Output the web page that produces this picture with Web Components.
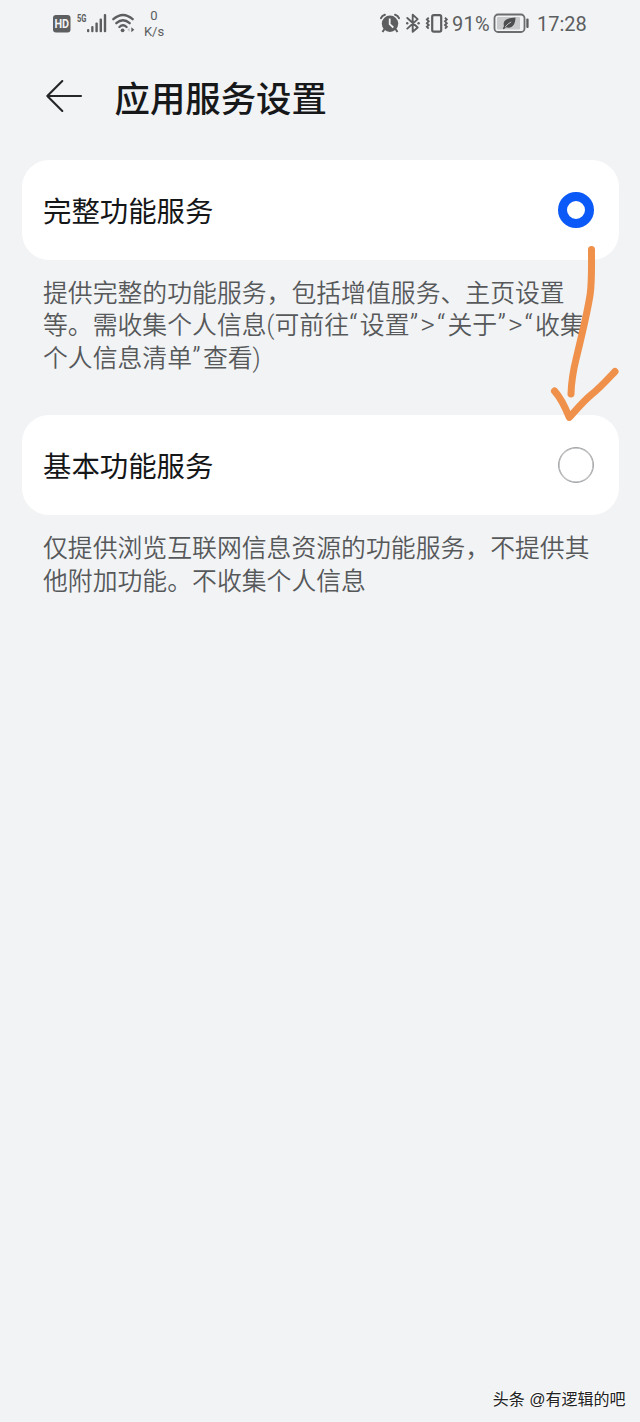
<!DOCTYPE html>
<html lang="zh-CN">
<head>
<meta charset="utf-8">
<title>应用服务设置</title>
<style>
body { margin: 0; background: #f1f3f5; font-family: Roboto, "Noto Sans CJK SC", sans-serif; }
</style>
</head>
<body>
<settings-page></settings-page>
<script>
const define = (name, html) => customElements.define(name, class extends HTMLElement {
  constructor() {
    super();
    this.attachShadow({ mode: 'open' }).innerHTML = html;
  }
});

define('status-bar', `
<style>
:host { display: flex; justify-content: space-between; box-sizing: border-box; height: 48px; padding: 0 53px 0 52px; color: #5c5e60; }
.side { display: flex; height: 48px; align-items: center; }
svg { display: block; flex: none; }
.rate { width: 24px; margin: -1px 0 0 6px; text-align: center; font-size: 13px; line-height: 15.5px; }
.rate div { white-space: nowrap; }
.pct { font-size: 20px; line-height: 24px; margin-left: 2px; width: 41px; letter-spacing: .3px; }
.time { font-size: 20px; line-height: 24px; margin-left: 7px; width: 50px; white-space: nowrap; }
</style>
<div class="side">
<svg width="84" height="48" viewBox="52 0 84 48" fill="#5c5e60">
<rect x="53" y="15" width="17.5" height="17.5" rx="3"/>
<text x="54.4" y="28.2" font-family="Roboto" font-weight="700" font-size="12" textLength="14.6" lengthAdjust="spacingAndGlyphs" fill="#f1f3f5">HD</text>
<text x="77" y="22" font-family="Roboto" font-weight="700" font-size="11" textLength="9.5" lengthAdjust="spacingAndGlyphs">5G</text>
<rect x="87" y="29" width="2.3" height="3.2" rx="1"/><rect x="91.2" y="26" width="2.3" height="6.2" rx="1"/><rect x="95.4" y="22.5" width="2.4" height="9.7" rx="1"/><rect x="99.6" y="18.5" width="2.4" height="13.7" rx="1"/><rect x="103.8" y="14" width="2.4" height="18.2" rx="1"/>
<g fill="none" stroke="#5c5e60" stroke-width="2.3" stroke-linecap="round"><path d="M113.3 19.2Q123 10.8 132.7 19.2M116.3 23.2Q123 17.4 129.7 23.2M119.4 27Q123 23.6 126.6 27"/></g>
<circle cx="122.6" cy="30.3" r="1.9"/><path d="M131.3 27.3l3 2.5-3 2.5z"/><path d="M129.6 27.8l-2.3 2 2.3 2z" opacity=".3"/>
</svg>
<div class="rate"><div>0</div><div>K/s</div></div>
</div>
<div class="side">
<svg width="71" height="48" viewBox="379 0 71 48" fill="#5c5e60">
<circle cx="390" cy="23.7" r="8.2"/><path d="M384.5 29l-2 3M395.5 29l2 3" stroke="#5c5e60" stroke-width="2"/>
<path d="M381 18.2Q382 15.5 384.9 14.8M399 18.2Q398 15.5 395.1 14.8" fill="none" stroke="#5c5e60" stroke-width="2" stroke-linecap="round"/>
<path d="M389.7 18.5v5.7l3.6 3.3" fill="none" stroke="#f1f3f5" stroke-width="1.8"/>
<path d="M407.3 18l10.4 9.5-5 4.3v-17l5 4.3-10.4 9.5" fill="none" stroke="#5c5e60" stroke-width="1.9" stroke-linejoin="round" stroke-linecap="round"/>
<circle cx="407.2" cy="23.3" r="1.2"/><circle cx="418.6" cy="23.3" r="1.2"/>
<rect x="432.2" y="15.1" width="9" height="16.5" rx="1.6" fill="none" stroke="#5c5e60" stroke-width="2.2"/>
<path d="M428.7 17.7l-1.8 1.8 1.8 1.8-1.8 1.9 1.8 1.8-1.8 1.8 1.8 1.8M445 17.7l1.8 1.8-1.8 1.8 1.8 1.9-1.8 1.8 1.8 1.8-1.8 1.8" fill="none" stroke="#5c5e60" stroke-width="1.9"/>
</svg>
<span class="pct">91%</span>
<svg width="37" height="48" viewBox="494 0 37 48" fill="#5c5e60">
<rect x="495.5" y="14.5" width="30" height="17.5" rx="3.5" fill="none" stroke="#6b6d6f" stroke-width="1.8"/>
<rect x="498" y="17" width="23" height="12.5" rx="1" fill="#c9cbcd"/>
<path d="M505 26C503.2 20.5 508 18 516.5 17.6 516.3 25 513 29 507 27.3L504.8 29.3 503.8 28.5z" fill="#4c4e50"/><path d="M506.2 27q2.5-3.5 6-5" fill="none" stroke="#c9cbcd" stroke-width=".9"/>
<rect x="527.3" y="18.5" width="2.3" height="9.5" rx="1"/>
</svg>
<span class="time">17:28</span>
</div>`);

define('page-header', `
<style>
:host { display: flex; align-items: center; height: 100px; box-sizing: border-box; padding: 0 0 2px 45px; }
svg { display: block; margin: -2px 31.5px 0 0; }
h1 { margin: 5px 0 0; color: #17181a; font-size: 35.4px; font-weight: 500; line-height: 50px; white-space: nowrap; }
</style>
<svg width="38" height="34" viewBox="0 0 38 34" fill="none" stroke="#242628" stroke-width="2.1" stroke-linecap="round" stroke-linejoin="round"><path d="M36 17H2.3M17.3 2L2.3 17l15 15"/></svg>
<h1><slot></slot></h1>`);

define('radio-mark', `
<style>
:host { display: block; box-sizing: border-box; width: 36px; height: 36px; border: 1.5px solid #a2a3a5; border-radius: 50%; }
:host(:not([checked])) { box-shadow: inset 0 0 0 .5px #a2a3a5; }
:host([checked]) { border: 9px solid #0b59f7; }
</style>`);

define('option-card', `
<style>
:host { display: block; }
.card { display: flex; align-items: center; justify-content: space-between; box-sizing: border-box; height: 99.5px; padding: 0 24.5px 0 21.5px; margin: 0 21.5px; border-radius: 27px; background: #fff; }
.title { color: #151618; font-size: 28.4px; line-height: 40px; margin-top: 6px; }
.desc { margin: 18px 0 -2px 43px; color: #56585a; font-weight: 350; font-size: 24.85px; line-height: 32.6px; white-space: nowrap; }
::slotted(b) { font-weight: inherit; font-size: 28px; line-height: 0; letter-spacing: 2.1px; margin-left: .3px; }
</style>
<div class="card"><span class="title"><slot name="title"></slot></span><slot name="mark"></slot></div>
<div class="desc"><slot></slot></div>`);

define('pen-arrow', `
<style>:host { position: absolute; left: 540px; top: 235px; } svg { display: block; }</style>
<svg width="90" height="195" viewBox="540 235 90 195" fill="none" stroke="#ef914b" stroke-width="7" stroke-linecap="round" stroke-linejoin="round">
<path d="M591.5 249.5C591.5 265 592 281 590.2 294C587.5 312 582 334 578 351C575 364 571.5 374 571 394"/>
<path d="M554.5 391C561 398 565.5 408 569.3 417.5C577 409 583 401.5 591.5 394.5C600 388 607 380 615 371.5"/>
</svg>`);

define('water-mark', `
<style>
:host { position: absolute; right: 14.5px; bottom: 10px; font-family: "Liberation Sans", "Noto Sans CJK SC", sans-serif; font-size: 16px; line-height: 24px; white-space: nowrap; color: #222; text-shadow: -1px -1px 0 #fff; }
</style><slot></slot>`);

define('settings-page', `
<style>
:host { display: block; position: relative; height: 1422px; overflow: hidden; background: #f1f3f5; }
main { display: flex; flex-direction: column; gap: 42.2px; margin-top: 12px; }
</style>
<status-bar></status-bar>
<page-header>应用服务设置</page-header>
<main>
<option-card><span slot="title">完整功能服务</span><radio-mark slot="mark" checked></radio-mark>提供完整的功能服务，包括增值服务、主页设置<br>等。需收集个人信息(可前往<b>“</b>设置<b>”&gt;“</b>关于<b>”&gt;“</b>收集<br>个人信息清单<b>”</b>查看)</option-card>
<option-card><span slot="title">基本功能服务</span><radio-mark slot="mark"></radio-mark>仅提供浏览互联网信息资源的功能服务，不提供其<br>他附加功能。不收集个人信息</option-card>
</main>
<pen-arrow></pen-arrow>
<water-mark>头条 @有逻辑的吧</water-mark>`);
</script>
</body>
</html>
